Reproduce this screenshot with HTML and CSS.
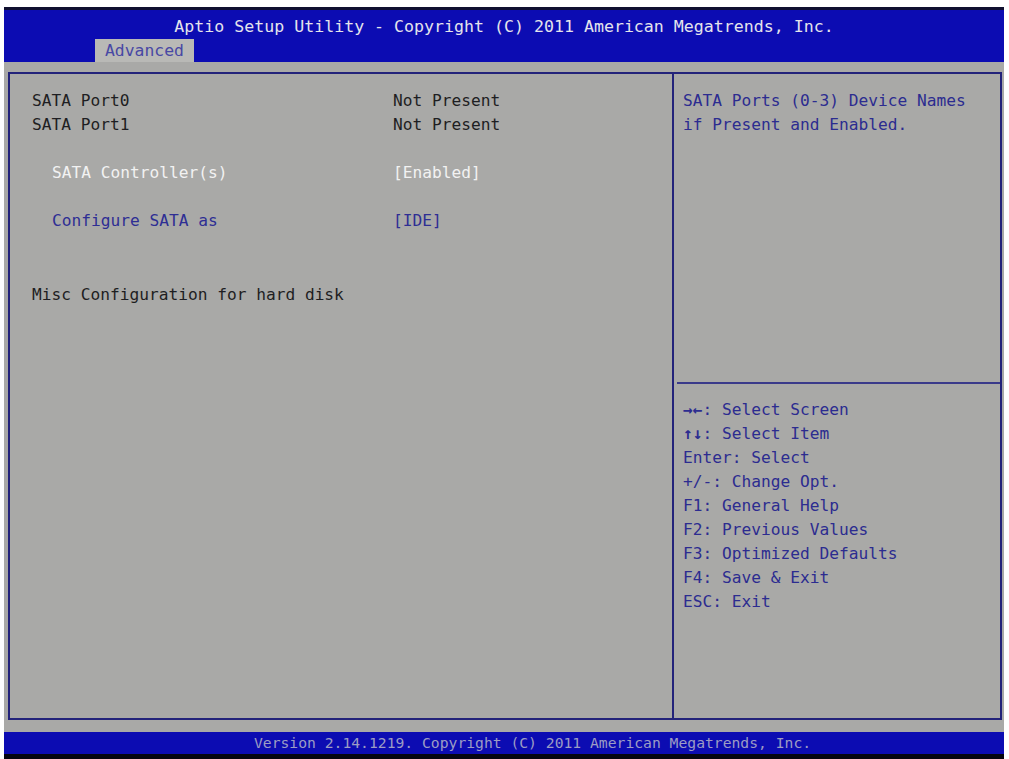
FILE: index.html
```html
<!DOCTYPE html>
<html lang="en">
<head>
<meta charset="UTF-8">
<title>Aptio Setup Utility</title>
<link rel="stylesheet" href="styles.css">
</head>
<body>

<div class="screen">
  <div class="header">
    <div class="title">Aptio Setup Utility - Copyright (C) 2011 American Megatrends, Inc.</div>
    <div class="tabs">
      <span class="tab">Advanced</span>
    </div>
  </div>

  <div class="main">
    <div class="frame">
      <div class="left">
        <div class="row"><span class="label">SATA Port0</span><span class="value">Not Present</span></div>
        <div class="row"><span class="label">SATA Port1</span><span class="value">Not Present</span></div>
        <div class="row"></div>
        <div class="row selected"><span class="label sub">SATA Controller(s)</span><span class="value">[Enabled]</span></div>
        <div class="row"></div>
        <div class="row option"><span class="label sub">Configure SATA as</span><span class="value">[IDE]</span></div>
        <div class="row"></div>
        <div class="row"></div>
        <div class="row"><span class="label">Misc Configuration for hard disk</span></div>
      </div>
      <div class="right">
        <div class="help">
          SATA Ports (0-3) Device Names<br>
          if Present and Enabled.
        </div>
        <hr>
        <div class="keys">
          <div><b>&#8594;&#8592;</b>: Select Screen</div>
          <div><b>&#8593;&#8595;</b>: Select Item</div>
          <div>Enter: Select</div>
          <div>+/-: Change Opt.</div>
          <div>F1: General Help</div>
          <div>F2: Previous Values</div>
          <div>F3: Optimized Defaults</div>
          <div>F4: Save &amp; Exit</div>
          <div>ESC: Exit</div>
        </div>
      </div>
    </div>
  </div>

  <div class="footer">Version 2.14.1219. Copyright (C) 2011 American Megatrends, Inc.</div>
</div>

</body>
</html>
```

FILE: styles.css
```css
body {
  margin: 0;
  background-color: #ffffff;
  font-family: "DejaVu Sans Mono", "Liberation Mono", monospace;
}
.screen {
  width: 1000px;
  height: 752px;
  margin: 7px 0 0 4px;
  display: flex;
  flex-direction: column;
  background-color: #a9a9a7;
  border-bottom: 5px solid #050510;
  box-sizing: border-box;
}
.header {
  height: 55px;
  background-color: #0c0cb2;
  border-top: 3px solid #101030;
  box-sizing: border-box;
  display: flex;
  flex-direction: column;
}
.title {
  color: #e4e4ec;
  font-size: 16.6px;
  text-align: center;
  padding-top: 7px;
  height: 29px;
}
.tabs {
  padding-left: 91px;
  display: flex;
  align-items: flex-end;
  flex: 1;
}
.tab {
  background-color: #b9b9b6;
  color: #4848a4;
  font-size: 16.4px;
  height: 23px;
  line-height: 24px;
  padding: 0 10px 0 10px;
}
.main {
  flex: 1;
  padding: 10px 2px 10px 4px;
}
.frame {
  height: 648px;
  border: 2px solid #23237a;
  display: grid;
  grid-template-columns: 662px 1fr;
  box-sizing: border-box;
}
.left {
  padding: 15px 0 0 22px;
  font-size: 16.2px;
  color: #1e1e22;
}
.row {
  display: flex;
  height: 24px;
  line-height: 24px;
}
.row:last-child {
  margin-top: 2px;
}
.label {
  width: 361px;
}
.label.sub {
  padding-left: 20px;
  width: 341px;
}
.selected {
  color: #f2f2f2;
}
.option {
  color: #2e2e94;
}
.right {
  border-left: 2px solid #23237a;
  display: flex;
  flex-direction: column;
  font-size: 16.2px;
  color: #2c2c90;
}
.help {
  padding: 15px 0 0 9px;
  line-height: 24px;
  height: 283px;
}
.right hr {
  border: 0;
  border-top: 2px solid #3a3a8a;
  margin: 10px 0 0 3px;
}
.keys {
  padding: 14px 0 0 9px;
  line-height: 24px;
}
.footer {
  height: 22px;
  background-color: #0c0cb2;
  color: #9c9cc4;
  font-size: 14.7px;
  line-height: 22px;
  padding-left: 250px;
}
```
